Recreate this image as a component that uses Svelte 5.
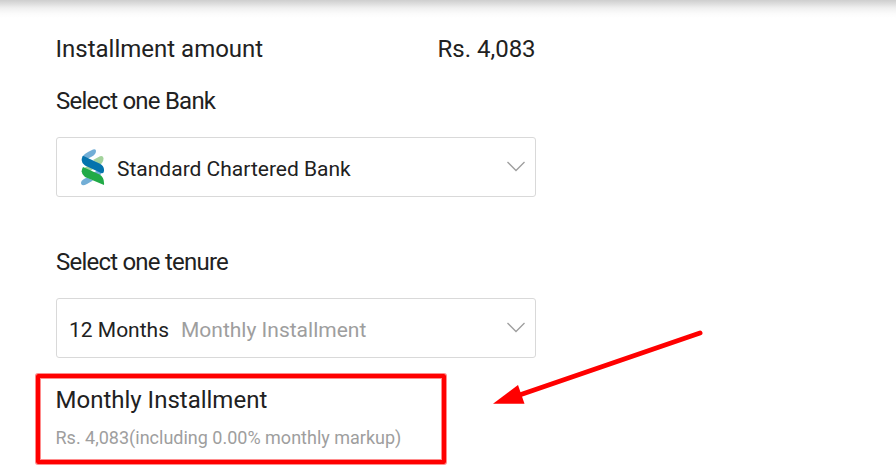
<script lang="ts">
    let amount = $state('Rs. 4,083');
    let bank = $state('Standard Chartered Bank');
    let tenure = $state('12 Months');
    let markup = $state('0.00%');
</script>

{#snippet chevron()}
    <svg class="chevron" width="20" height="12" viewBox="0 0 20 12" aria-hidden="true">
        <path d="M1.500 1 L10 9.500 L18.500 1" />
    </svg>
{/snippet}

<div class="page">
    <div class="top-shadow"></div>

    <main class="plan">
        <div class="amount-row">
            <span>Installment amount</span>
            <span>{amount}</span>
        </div>

        <h3 class="label bank-label">Select one Bank</h3>
        <button class="select" type="button">
            <svg class="logo" width="24" height="37" viewBox="0 0 24 37" aria-hidden="true">
                <path fill="#72aed6" d="M1 8 Q3 5 7 3 L12 .5 Q15 -.5 15 2 Q15 5 11 7.500 L6 10 Z" />
                <path fill="#a3d39c" d="M12 11 L19 7.200 Q22.500 6 22.500 9.500 Q22.500 13 19 16 Z" />
                <path fill="#a3d39c" d="M1 21 Q3 19 6.500 17 L12 20 L7 24 Z" />
                <path fill="#72aed6" d="M12 24 L18 20.500 L21 23 Q20 26 17.500 27 Z" />
                <path fill="#72aed6" d="M0 33.500 Q0 31.500 3 30 L6 28.500 L12 31.500 L6 35 Q0 38 0 33.500 Z" />
                <path fill="#0473ad" d="M2 6.800 L18.500 14.500 Q23.500 17 23 22 Q22.700 25 20 24 L4 16.500 Q-1.500 12.500 2 6.800 Z" />
                <path fill="#21aa47" d="M2 18 L18.500 25.500 Q23.500 28 23 36 L4 28 Q-1.500 24 2 18 Z" />
            </svg>
            <span class="value">{bank}</span>
            {@render chevron()}
        </button>

        <h3 class="label tenure-label">Select one tenure</h3>
        <button class="select" type="button">
            <span class="value">{tenure}</span>
            <span class="hint">Monthly Installment</span>
            {@render chevron()}
        </button>

        <div class="summary">
            <h3 class="summary-title">Monthly Installment</h3>
            <p>{amount}(including {markup} monthly markup)</p>
        </div>
    </main>

    <svg class="arrow" width="212" height="80" viewBox="0 0 212 80" aria-hidden="true">
        <path d="M30 64.500 L209 3" />
        <polygon points="2,73.700 27,55 33.500,73.700" />
    </svg>
</div>

<style>
    :global(body) {
        background: #fff;
    }

    .page {
        position: relative;
        box-sizing: border-box;
        height: 473px;
        overflow: hidden;
        font-family: Roboto, "Liberation Sans", sans-serif;
        color: #212121;
    }

    .top-shadow {
        height: 18px;
        background: linear-gradient(#cecece, #d9d9d9 15%, #f0f0f0 45%, #fbfbfb 75%, #fff);
    }

    .plan {
        width: 480px;
        margin-left: 56px;
    }

    .amount-row {
        display: flex;
        justify-content: space-between;
        margin: 0 0.4px 0 -0.5px;
        padding-top: 15px;
        font-size: 24px;
        line-height: 32px;
    }

    .label,
    .summary-title {
        margin: 0;
        font-size: 24px;
        font-weight: 400;
        line-height: 32px;
    }

    .label {
        letter-spacing: -0.78px;
    }

    .bank-label {
        padding: 20px 0;
    }

    .tenure-label {
        padding: 49px 0 20px;
    }

    .select {
        display: flex;
        align-items: center;
        box-sizing: border-box;
        width: 100%;
        height: 60px;
        padding: 3px 9px 0 12px;
        background: #fff;
        border: 1px solid #d9d9d9;
        border-radius: 3px;
        color: inherit;
        font-family: inherit;
        font-size: 21px;
        text-align: left;
    }

    .logo {
        margin: -2px 12px 0 12px;
    }

    .hint {
        margin-left: 12px;
        color: #9e9e9e;
    }

    .chevron {
        margin: -4px 0 0 auto;
        fill: none;
        stroke: #9e9e9e;
        stroke-width: 1.3;
    }

    .summary {
        box-sizing: border-box;
        width: 410px;
        height: 90px;
        margin: 16px 0 0 -20px;
        padding: 6px 0 0 15.5px;
        border: 4px solid #f00;
        border-radius: 2px;
        box-shadow: 0 0 0 1px rgba(255, 0, 0, 0.45), inset 0 0 0 1px rgba(255, 0, 0, 0.45);
    }

    .summary p {
        margin: 10px 0 0;
        color: #9e9e9e;
        font-size: 18px;
        line-height: 24px;
    }

    .arrow {
        position: absolute;
        top: 330px;
        left: 491px;
        fill: #f00;
    }

    .arrow path {
        stroke: #f00;
        stroke-width: 5;
        stroke-linecap: round;
    }
</style>
